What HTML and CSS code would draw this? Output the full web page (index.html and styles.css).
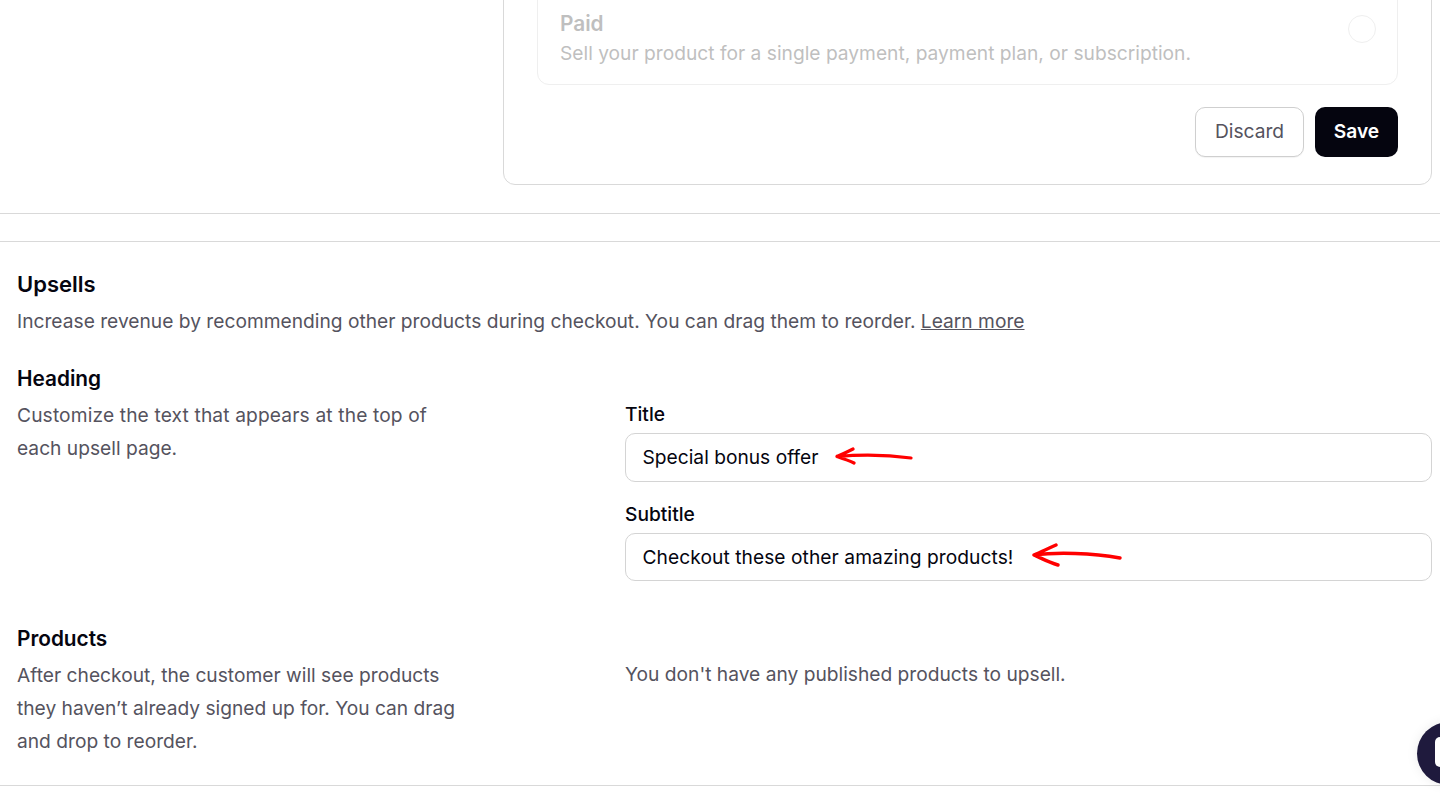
FILE: index.html
```html
<!DOCTYPE html>
<html lang="en">
<head>
<meta charset="utf-8">
<title>Upsells</title>
<link rel="stylesheet" href="styles.css">
</head>
<body>
<main class="page">
  <section class="top-section">
    <div class="pricing-card">
      <div class="option">
        <div class="option-text">
          <div class="option-title">Paid</div>
          <div class="option-desc">Sell your product for a single payment, payment plan, or subscription.</div>
        </div>
        <span class="radio"></span>
      </div>
      <div class="actions">
        <button class="btn btn-ghost">Discard</button>
        <button class="btn btn-dark">Save</button>
      </div>
    </div>
  </section>
  <div class="spacer"></div>
  <section class="upsells">
    <h2 class="heading heading-main">Upsells</h2>
    <p class="lead">Increase revenue by recommending other products during checkout. You can drag them to reorder. <a class="link" href="#">Learn more</a></p>
    <div class="row row-heading">
      <div class="side">
        <h3 class="heading">Heading</h3>
        <p class="side-text"><span class="wide-line">Customize the text that appears at the top of</span><br>each upsell page.</p>
      </div>
      <div class="fields">
        <div class="field">
          <label class="field-label">Title</label>
          <div class="input">Special bonus offer
            <svg class="arrow arrow-one" width="80" height="24" viewBox="0 0 80 24"><path d="M2 11.500C20 10 50 9.500 76 13M2 11.500C8 9 12 7 18 4M2 11.500C8 13.500 14 15.500 19 18" fill="none" stroke="#ff0000" stroke-width="3.200" stroke-linecap="round" stroke-linejoin="round"/></svg>
          </div>
        </div>
        <div class="field">
          <label class="field-label">Subtitle</label>
          <div class="input input-wide">Checkout these other amazing products!
            <svg class="arrow arrow-two" width="92" height="26" viewBox="0 0 92 26"><path d="M2 12C25 9 60 10 88 15M2 12C9 9 15 6 24 2M2 12C9 15 16 19 26 22" fill="none" stroke="#ff0000" stroke-width="3.400" stroke-linecap="round" stroke-linejoin="round"/></svg>
          </div>
        </div>
      </div>
    </div>
    <div class="row row-products">
      <div class="side">
        <h3 class="heading">Products</h3>
        <p class="side-text">After checkout, the customer will see products<br>they haven’t already signed up for. You can drag<br>and drop to reorder.</p>
      </div>
      <p class="empty">You don't have any published products to upsell.</p>
    </div>
  </section>
</main>
<div class="chat-bubble"><span class="chat-glyph"></span></div>
</body>
</html>
```
FILE: styles.css
```css
* { box-sizing: border-box; }
html, body { margin: 0; height: 808px; overflow: hidden; background: #fff; }
body { font-family: Inter, "Liberation Sans", sans-serif; font-size: 19.2px; color: #05050f; }

.top-section { padding: 0 8px 28px 503px; margin-top: -40px; border-bottom: 1px solid #d9d9d9; height: 254px; }
.pricing-card { border: 1px solid #d9d9d9; border-radius: 12px; height: 225px; padding: 0 33px 0 33px; }
.option { height: 125px; margin-top: -1px; border: 1px solid #efefef; border-radius: 12px; padding: 50px 21px 0 22px; display: flex; justify-content: space-between; align-items: flex-start; }
.option-title { font-size: 20.8px; font-weight: 600; line-height: 26px; color: #bfbfbf; }
.option-desc { line-height: 26px; color: #bfbfbf; margin-top: 3px; }
.radio { width: 28px; height: 28px; border: 1px solid #efefef; border-radius: 50%; margin-top: 4px; }
.actions { display: flex; justify-content: flex-end; gap: 11px; margin-top: 22px; }
.btn { height: 50px; border-radius: 10px; font: inherit; font-weight: 500; padding: 0 0 2px; }
.btn-ghost { width: 109px; background: #fff; color: #55535e; border: 1px solid #cfcfcf; box-shadow: 0 1px 1px rgba(0,0,0,.05); font-weight: 400; }
.btn-dark { width: 83px; background: #05050f; color: #fff; border: 0; font-weight: 600; }

.spacer { height: 28px; border-bottom: 1px solid #d9d9d9; }

.upsells { padding: 29px 8px 0 17px; height: 544px; border-bottom: 1px solid #d9d9d9; }
.heading { margin: 0; font-size: 20.8px; font-weight: 600; line-height: 26px; color: #05050f; }
.heading-main { font-size: 22px; }
.lead { margin: 11px 0 0; line-height: 26px; color: #55535e; }
.link { color: #55535e; text-decoration: underline; }

.row { display: grid; grid-template-columns: 608px 807px; }
.row-heading { margin-top: 32px; }
.row-products { margin-top: 45px; }
.side-text { margin: 7px 0 0; line-height: 33px; color: #55535e; }
.wide-line { letter-spacing: .13px; }

.fields { display: flex; flex-direction: column; gap: 19px; padding-top: 35px; }
.field-label { display: block; font-weight: 500; line-height: 26px; color: #05050f; margin-bottom: 6px; }
.input { position: relative; height: 49px; border: 1px solid #d4d4d4; border-radius: 10px; padding: 0 17px 0 16.500px; line-height: 47px; color: #05050f; }
.input-wide { letter-spacing: .06px; }
.field:last-child .input { height: 48px; }
.arrow { position: absolute; }
.arrow-one { left: 209px; top: 11px; }
.arrow-two { left: 406px; top: 9px; }

.empty { margin: 0; padding-top: 35px; line-height: 26px; color: #55535e; }

.chat-bubble { position: fixed; left: 1417px; top: 722px; width: 63px; height: 63px; border-radius: 50%; background: #1f1a3d; box-shadow: 0 0 12px rgba(0,0,0,.08); }
.chat-glyph { position: absolute; left: 18px; top: 15px; width: 26px; height: 30px; border-radius: 5px; background: #fff; }
```
